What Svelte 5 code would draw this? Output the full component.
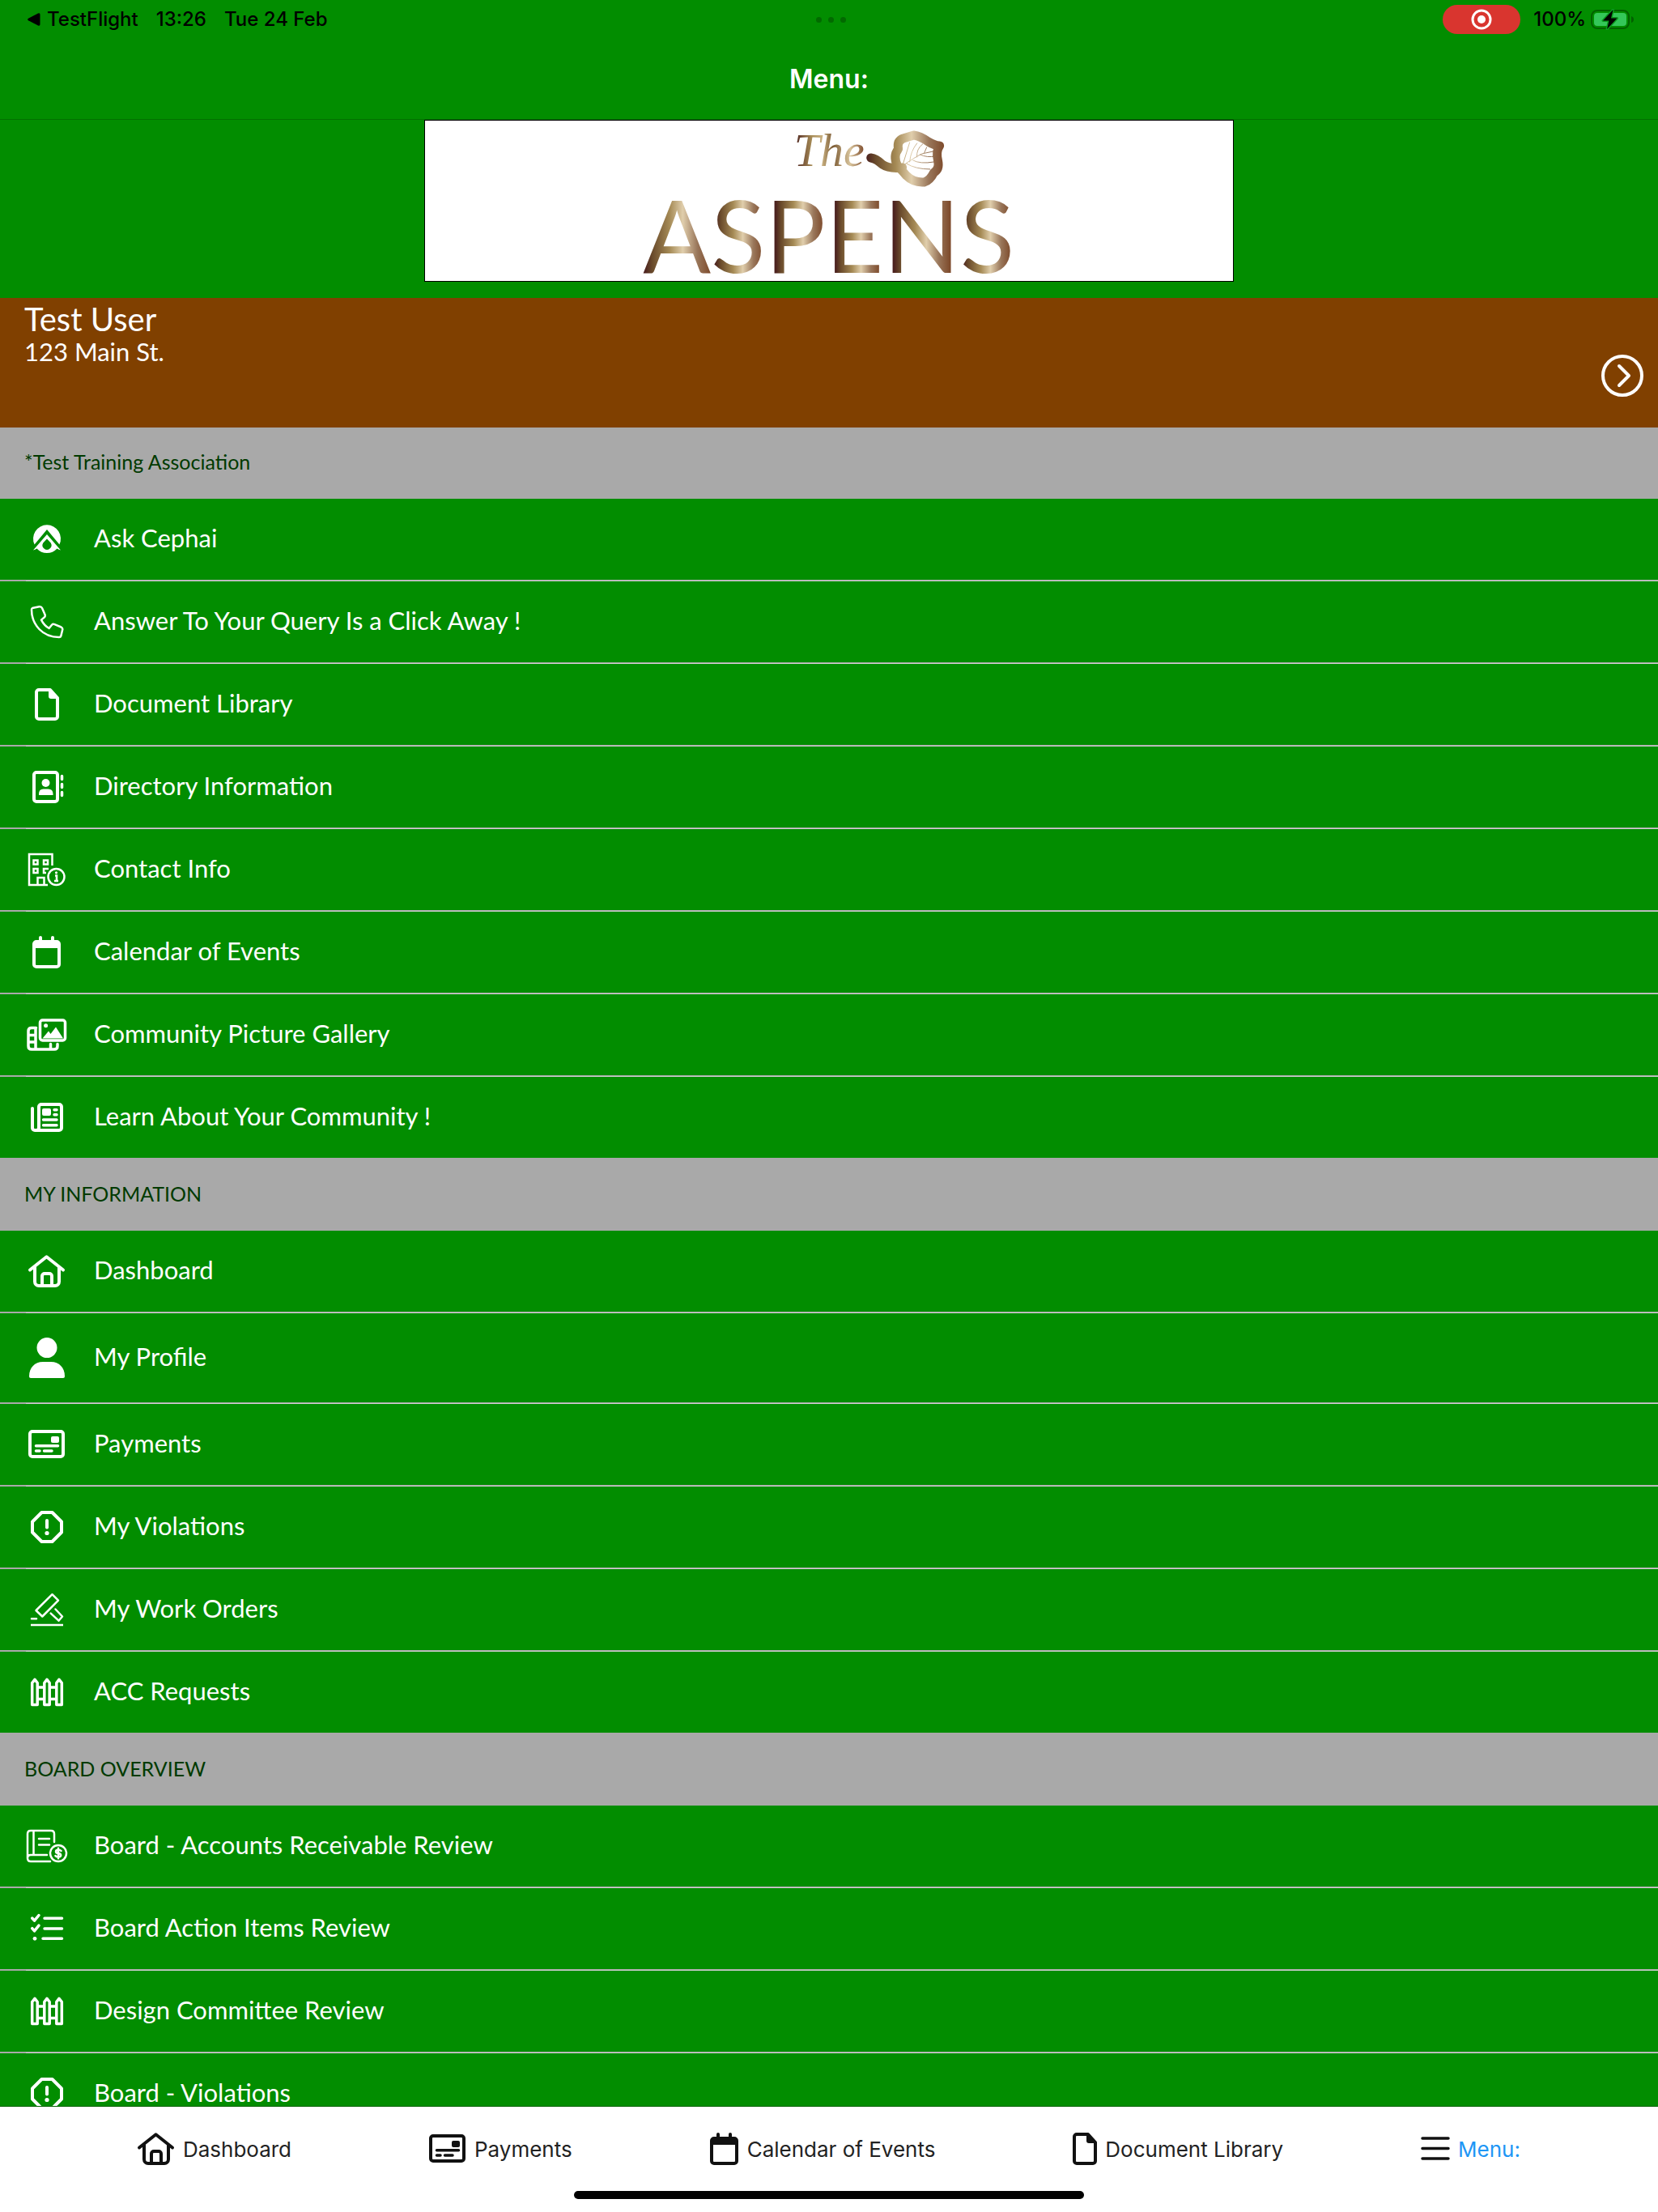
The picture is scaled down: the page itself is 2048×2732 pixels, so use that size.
<script>
    const icons = {
        ask: { x: 7, w: 34 },
        phone: { x: 4, w: 40 },
        file: { x: 9, w: 30 },
        directory: { x: 6, w: 38 },
        building: { x: 1, w: 46 },
        calendar: { x: 6, w: 36 },
        gallery: { x: 0, w: 48 },
        news: { x: 4, w: 40 },
        home: { x: 1, w: 46 },
        person: { x: 2, w: 44, h: 50 },
        card: { x: 1, w: 46 },
        alert: { x: 4, w: 40 },
        gavel: { x: 4, w: 40 },
        fence: { x: 4, w: 40 },
        ledger: { x: 0, w: 48 },
        checklist: { x: 4, w: 40 },
        menu: { x: 6, w: 36 }
    };

    const sections = [
        {
            title: "*Test Training Association",
            items: [
                { label: "Ask Cephai", icon: "ask" },
                { label: "Answer To Your Query Is a Click Away !", icon: "phone" },
                { label: "Document Library", icon: "file" },
                { label: "Directory Information", icon: "directory" },
                { label: "Contact Info", icon: "building" },
                { label: "Calendar of Events", icon: "calendar" },
                { label: "Community Picture Gallery", icon: "gallery" },
                { label: "Learn About Your Community !", icon: "news" }
            ]
        },
        {
            title: "MY INFORMATION",
            items: [
                { label: "Dashboard", icon: "home" },
                { label: "My Profile", icon: "person" },
                { label: "Payments", icon: "card" },
                { label: "My Violations", icon: "alert" },
                { label: "My Work Orders", icon: "gavel" },
                { label: "ACC Requests", icon: "fence" }
            ]
        },
        {
            title: "BOARD OVERVIEW",
            items: [
                { label: "Board - Accounts Receivable Review", icon: "ledger" },
                { label: "Board Action Items Review", icon: "checklist" },
                { label: "Design Committee Review", icon: "fence" },
                { label: "Board - Violations", icon: "alert" }
            ]
        }
    ];

    const tabs = [
        { label: "Dashboard", icon: "home" },
        { label: "Payments", icon: "card" },
        { label: "Calendar of Events", icon: "calendar" },
        { label: "Document Library", icon: "file" },
        { label: "Menu:", icon: "menu" }
    ];

    let activeTab = $state("Menu:");

    // one metallic sweep per letter of the wordmark
    const letterEdges = [[271, 353], [358, 418], [433, 492], [507, 562], [579, 649], [664, 724]];
    const metal = [
        [0, "#4a1f1e"], [0.12, "#694a2b"], [0.38, "#a58a55"],
        [0.58, "#e0ceac"], [0.8, "#99765a"], [1, "#7d4a2b"]
    ];
    const stops = letterEdges.flatMap(([from, to]) =>
        metal.map(([at, color]) => ({ offset: (from + (to - from) * at) / 1000, color }))
    );
</script>

{#snippet glyph(name, tight)}
    {@const box = icons[name]}
    {@const x = tight ? box.x : 0}
    {@const w = tight ? box.w : 48}
    {@const h = box.h ?? 40}
    <svg class="icon" viewBox="{x} 0 {w} {h}" width={w} height={h} aria-hidden="true">
        {#if name === "ask"}
            <path class="solid" d="M8.6 26.5A17 17 0 1 1 39.4 26.5L24 8z" />
            <path class="solid" fill-rule="evenodd" d="M24 14L41 33.5Q38.500 33 36.500 31.500Q31.500 37 24 37T11.500 31.500Q9.500 33 7 33.500zM24 19.500L19.300 24.500A5.500 5.500 0 1 0 28.700 24.500z" />
        {:else if name === "phone"}
            <path class="thin" d="M6 3L14.500 1.200Q17 .8 18 3L21.500 11Q22.300 13.200 20.800 14.400L17 17.600Q20.500 24.500 26.600 28L30 23.800Q31.300 22.300 33.400 23.100L41.500 26.500Q43.700 27.600 43.200 29.800L41.300 37.500Q40.800 39 39 39Q24 39 14.400 29Q5 19 5 5Q5 3.500 6 3z" />
        {:else if name === "file"}
            <path d="M14 2H28L37 12V35a3 3 0 0 1-3 3H14a3 3 0 0 1-3-3V5a3 3 0 0 1 3-3z" />
            <path class="solid" d="M26 2H29L38 11V13H29a3 3 0 0 1-3-3z" />
        {:else if name === "directory"}
            <rect x="8" y="2" width="29" height="36" rx="3" />
            <circle class="solid" cx="22.500" cy="15" r="5" />
            <path class="solid" d="M14 30v-1.500Q14 22.500 19.500 22.500H25.500Q31.500 22.500 31.500 28.500V30z" />
            <path class="medium" d="M42.500 6.500v4M42.500 16.500v4M42.500 26.500v4" />
        {:else if name === "building"}
            <path class="thin square" d="M25 39H2V1H30.500V15M12.500 39V30H20.500V39" />
            <path class="thin square" d="M7.500 8.500h5v5h-5zM20 8.500h5v5h-5zM7.500 19h5v5h-5zM23 24H20V19h6" />
            <circle class="thin" cx="35.500" cy="29" r="10" />
            <path class="thin square" d="M34 27.500h2v6M33 34h5" />
            <circle class="solid" cx="35.500" cy="23.800" r="1.600" />
        {:else if name === "calendar"}
            <path d="M16 2v5M31 2v5" />
            <rect x="8" y="7" width="31" height="31" rx="3" />
            <path class="solid" d="M7 8h33v7H7z" />
        {:else if name === "gallery"}
            <rect class="medium" x="15.500" y="2" width="31" height="25" rx="3" />
            <circle class="solid" cx="22.600" cy="8.700" r="2.500" />
            <path class="solid" d="M18.500 24.500L26 15.500L28.500 19L35 10.500L44 24.500z" />
            <path class="medium" d="M10.500 11.500H5Q1 11.500 1 15.500V34Q1 38 5 38H33Q37 38 37 34V31.500M10 12V38M2 20.500h8M2 29h8M28.500 31.500V37" />
        {:else if name === "news"}
            <path d="M17 4H39a3 3 0 0 1 3 3V33a3 3 0 0 1-3 3H9a3 3 0 0 1-3-3V9M14 33V7a3 3 0 0 1 3-3M14 33a3 3 0 0 1-3 3" />
            <rect class="solid" x="18" y="9" width="11" height="9" rx="2" />
            <path class="medium" d="M33 10.700h3M33 16.700h3M19.500 23h16.500M19.500 29.700h16.500" />
        {:else if name === "home"}
            <path d="M3 18.500L23.500 2.300L44 18.500M9 15V33a5 5 0 0 0 5 5H34a5 5 0 0 0 5-5V15" />
            <path d="M18 37V26a3 3 0 0 1 3-3H27a3 3 0 0 1 3 3V37" />
        {:else if name === "person"}
            <circle class="solid" cx="24" cy="12.600" r="12.500" />
            <path class="solid" d="M2 48C2 37 9 30 19 30H29C39 30 46 37 46 48Q46 50 44 50H4Q2 50 2 48z" />
        {:else if name === "card"}
            <rect x="3" y="4" width="41" height="31" rx="3" />
            <rect class="solid" x="29" y="10" width="10" height="8" rx="2" />
            <path class="medium" d="M10.500 21.700H37.500M10.500 28H15M20.500 28H30" />
        {:else if name === "alert"}
            <path d="M17.500 2H30.500L42 13.500V26.500L30.500 38H17.500L6 26.500V13.500z" />
            <path d="M24 12v8.500" />
            <circle class="solid" cx="24" cy="27.500" r="2.600" />
        {:else if name === "gavel"}
            <path class="thin" d="M30.500 1.200L38 8.700L18.300 28.500L10.500 21zM34.500 19.500L43 28.500L38.500 33.700L28.700 24.700M5 31.300h6" />
            <path class="thin square" d="M4 39H44" />
        {:else if name === "fence"}
            <path class="medium" d="M5.700 8.500L9 4.300L12.200 8.500V35.500H5.700zM20.800 8.500L24 4.300L27.200 8.500V35.500H20.800zM35.800 8.500L39 4.300L42.300 8.500V35.500H35.800z" />
            <path class="medium square" d="M13 14h7M28 14h7M13 28.500h7M28 28.500h7" />
        {:else if name === "ledger"}
            <path class="thin" d="M33 15V5Q33 1 29 1H4Q0 1 0 5V35Q0 39 4 39H28M0 35Q0 31 4 31H24M7.500 1V31M14 11H27M14 18.500H27" />
            <circle class="thin" cx="38" cy="29" r="10" />
            <path class="thin" d="M41.500 26Q40.500 24.700 38 24.700Q35 24.700 35 26.700T38 29T41.200 31.300T38 33.500Q35.500 33.500 34.500 32M38 22.800V35.300" />
        {:else if name === "checklist"}
            <path class="medium" d="M21 7.300H42.500M21 20H42.500M19 32.300H42.500M5.700 7L8.500 10.200L14 3.500M5.700 19.700L8.500 22.900L14 16.200" />
            <circle class="solid" cx="9" cy="32.300" r="2.400" />
        {:else if name === "menu"}
            <path class="medium" d="M8 7H40M8 19.500H40M8 32H40" />
        {/if}
    </svg>
{/snippet}

<div class="screen">
    <div class="status_bar">
        <div class="status_left">
            <span class="back"><svg viewBox="0 0 16 16" width="16" height="16" aria-hidden="true"><path d="M1 6.700L13 .5Q15.500-.4 15.500 2V14Q15.500 16.400 13 15.500L1 9.300Q-.8 8 1 6.700z" /></svg>TestFlight</span>
            <span>13:26</span>
            <span>Tue 24 Feb</span>
        </div>
        <div class="dots"><i></i><i></i><i></i></div>
        <div class="status_right">
            <span class="recording">
                <svg viewBox="0 0 26 26" width="26" height="26" aria-hidden="true">
                    <circle cx="13" cy="13" r="11" fill="none" stroke="#fff" stroke-width="3" />
                    <circle cx="13" cy="13" r="5" fill="#fff" />
                </svg>
            </span>
            <span>100%</span>
            <svg class="battery" viewBox="0 0 53 26" width="53" height="26" aria-hidden="true">
                <rect x="1" y="2" width="46" height="22" rx="7" fill="none" stroke="#026100" stroke-width="2" />
                <rect x="4" y="5" width="40" height="16" rx="4" fill="#34c759" />
                <path d="M50 9Q53 10 53 13T50 17z" fill="#026100" />
                <path d="M27.500 1L15 14.500H22.500L20 25L32.500 11.500H25z" fill="#000" stroke="#0b9a1f" stroke-width="3" paint-order="stroke" stroke-linejoin="round" />
            </svg>
        </div>
    </div>

    <header>
        <h1>Menu:</h1>
    </header>

    <div class="banner">
        <div class="logo">
            <svg viewBox="0 0 998 198" role="img" aria-label="The Aspens">
                <defs>
                    <linearGradient id="letters" gradientUnits="userSpaceOnUse" x1="0" x2="1000" y1="0" y2="0">
                        {#each stops as stop}
                            <stop offset={stop.offset} stop-color={stop.color} />
                        {/each}
                    </linearGradient>
                    <linearGradient id="script">
                        <stop offset="0" stop-color="#4a1f1e" />
                        <stop offset=".25" stop-color="#a58a55" />
                        <stop offset=".4" stop-color="#c9b182" />
                        <stop offset=".55" stop-color="#7b5a33" />
                        <stop offset=".8" stop-color="#d8c49c" />
                        <stop offset="1" stop-color="#7d4a2b" />
                    </linearGradient>
                    <linearGradient id="leaf" gradientUnits="userSpaceOnUse" x1="545" x2="642" y1="0" y2="0">
                        <stop offset="0" stop-color="#4a1f1e" />
                        <stop offset=".12" stop-color="#694a2b" />
                        <stop offset=".38" stop-color="#a58a55" />
                        <stop offset=".58" stop-color="#e0ceac" />
                        <stop offset=".8" stop-color="#99765a" />
                        <stop offset="1" stop-color="#7d4a2b" />
                    </linearGradient>
                </defs>
                <text class="logo_script" x="456" y="56" fill="url(#script)">The</text>
                <text class="logo_name" x="499" y="188" text-anchor="middle" fill="url(#letters)">ASPENS</text>
                <g fill="none" stroke="url(#leaf)" stroke-linecap="round" stroke-linejoin="round">
                    <path stroke-width="11" d="M551 46Q558 47 565 54Q574 60 590 58" />
                    <path stroke-width="11" d="M584 56Q578 44 585 35Q583 25 591 22L604 18Q612 19 622 26Q630 31 636 31Q631 38 634 50Q636 60 629 64Q624 74 617 76Q604 77 595 68Q590 62 584 56z" />
                    <path stroke-width="1" d="M590 56Q604 46 614 41L628 38M590 56L599 27M599 51Q600 38 608 28M608 45Q607 35 615 29M617 40L620 33M595 53Q606 60 624 60M603 49Q612 54 629 51M612 42Q620 46 631 44" />
                </g>
            </svg>
        </div>
    </div>

    <main>
        <button class="account">
            <span class="account_text">
                <span class="name">Test User</span>
                <span class="address">123 Main St.</span>
            </span>
            <svg viewBox="0 0 52 52" width="52" height="52" aria-hidden="true">
                <circle cx="26" cy="26" r="24" />
                <path d="M22 14L34 26L22 38" />
            </svg>
        </button>

        {#each sections as section}
            <section>
                <h2>{section.title}</h2>
                <ul>
                    {#each section.items as item}
                        <li>
                            <button class="row">
                                {@render glyph(item.icon, false)}
                                <span>{item.label}</span>
                            </button>
                        </li>
                    {/each}
                </ul>
            </section>
        {/each}
    </main>

    <nav>
        <div class="tabs">
            {#each tabs as tab}
                <button class="tab" class:active={tab.label === activeTab} onclick={() => (activeTab = tab.label)}>
                    {@render glyph(tab.icon, true)}
                    <span>{tab.label}</span>
                </button>
            {/each}
        </div>
        <div class="home_bar"></div>
    </nav>
</div>

<style>
    :global(body) {
        margin: 0;
        background: #028d00;
    }

    .screen {
        display: flex;
        flex-direction: column;
        height: 100vh;
        background: #028d00;
        color: white;
        font-family: Lato, "Open Sans", sans-serif;
    }

    button {
        border: 0;
        margin: 0;
        padding: 0;
        background: none;
        color: inherit;
        font: inherit;
        text-align: left;
        cursor: pointer;
    }

    .status_bar {
        display: grid;
        grid-template-columns: 1fr auto 1fr;
        align-items: center;
        height: 48px;
        flex: none;
        padding: 0 30px 0 34px;
        color: black;
        font: 500 24px/48px Inter, sans-serif;
    }

    .status_left {
        display: flex;
        gap: 22px;
    }

    .back {
        display: flex;
        align-items: center;
        gap: 8px;
    }

    .dots {
        display: flex;
        gap: 8px;
    }

    .dots i {
        width: 7px;
        height: 7px;
        border-radius: 50%;
        background: #026a00;
    }

    .status_right {
        display: flex;
        align-items: center;
        justify-content: flex-end;
    }

    .recording {
        display: flex;
        align-items: center;
        justify-content: center;
        width: 96px;
        height: 36px;
        margin-right: 16px;
        border-radius: 18px;
        background: #d9352f;
    }

    .battery {
        margin-left: 6px;
    }

    header {
        flex: none;
        height: 100px;
        box-sizing: border-box;
        border-bottom: 1px solid #027000;
    }

    h1 {
        margin: 0;
        font: 600 32px/100px Inter, sans-serif;
        text-align: center;
    }

    .banner {
        flex: none;
        padding-bottom: 20px;
    }

    .logo {
        width: 48.8%;
        box-sizing: border-box;
        margin: 0 auto;
        border: 1px solid black;
        background: white;
    }

    .logo svg {
        display: block;
        width: 100%;
        overflow: visible;
    }

    .logo_script {
        font: italic 58px "Liberation Serif", serif;
    }

    .logo_name {
        font: 124px Lato, sans-serif;
    }

    main {
        flex: 1;
        min-height: 0;
        overflow: hidden;
    }

    .account {
        display: flex;
        justify-content: space-between;
        width: 100%;
        height: 160px;
        box-sizing: border-box;
        padding: 5px 18px 38px 30px;
        background: #804000;
    }

    .account_text {
        display: flex;
        flex-direction: column;
    }

    .account svg {
        align-self: flex-end;
        fill: none;
        stroke: white;
        stroke-width: 4;
        stroke-linecap: round;
        stroke-linejoin: round;
    }

    .name {
        font-size: 40px;
        line-height: 42px;
    }

    .address {
        font-size: 31px;
        line-height: 38px;
    }

    h2 {
        margin: 0;
        padding: 0 30px 4px;
        background: #a9a9a9;
        color: #003a00;
        font-size: 25px;
        font-weight: 400;
        line-height: 84px;
    }

    ul {
        margin: 0;
        padding: 0;
        list-style: none;
    }

    /* grey rule with a lighter inset line under it */
    li::after {
        content: "";
        display: block;
        height: 2px;
        background: linear-gradient(#cfcfcf, #cfcfcf) 32px 1px no-repeat #a9a9a9;
    }

    li:last-child::after {
        background: #a9a9a9;
    }

    .row {
        display: flex;
        align-items: center;
        gap: 34px;
        width: 100%;
        padding: 30px 34px;
        font-size: 31px;
        line-height: 36px;
    }

    .row span {
        padding-bottom: 4px;
    }

    .icon {
        flex: none;
        display: block;
        overflow: visible;
        fill: none;
        stroke: currentColor;
        stroke-width: 4;
        stroke-linecap: round;
        stroke-linejoin: round;
    }

    .icon .solid {
        fill: currentColor;
        stroke: none;
    }

    .icon .thin {
        stroke-width: 2.5;
    }

    .icon .medium {
        stroke-width: 3.5;
    }

    .icon .square {
        stroke-linecap: butt;
        stroke-linejoin: miter;
    }

    nav {
        flex: none;
        border-top: 1px solid #026100;
        background: white;
        color: #111;
    }

    .tabs {
        display: flex;
        justify-content: space-evenly;
        height: 104px;
    }

    .tab {
        display: flex;
        align-items: center;
        gap: 10px;
        font: 26px/30px Inter, sans-serif;
    }

    .tab span {
        padding-top: 2px;
        color: #222;
    }

    .tab.active span {
        color: #1e96f5;
    }

    .home_bar {
        width: 630px;
        max-width: 60%;
        height: 10px;
        margin: 0 auto 16px;
        border-radius: 5px;
        background: black;
    }
</style>
